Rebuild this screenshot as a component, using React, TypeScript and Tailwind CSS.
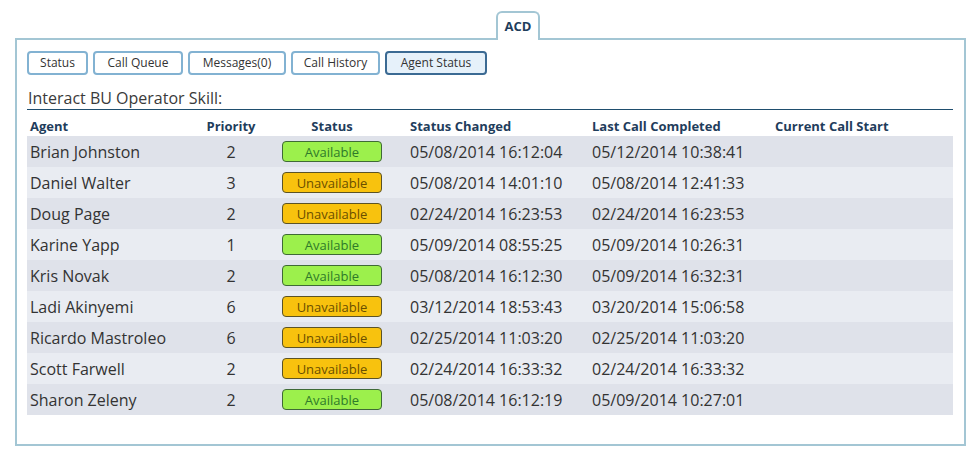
import React from 'react';

type Agent = {
  name: string;
  priority: number;
  available: boolean;
  changed: string;
  lastCall: string;
  current: string;
};

const agents: Agent[] = [
  { name: 'Brian Johnston', priority: 2, available: true, changed: '05/08/2014 16:12:04', lastCall: '05/12/2014 10:38:41', current: '' },
  { name: 'Daniel Walter', priority: 3, available: false, changed: '05/08/2014 14:01:10', lastCall: '05/08/2014 12:41:33', current: '' },
  { name: 'Doug Page', priority: 2, available: false, changed: '02/24/2014 16:23:53', lastCall: '02/24/2014 16:23:53', current: '' },
  { name: 'Karine Yapp', priority: 1, available: true, changed: '05/09/2014 08:55:25', lastCall: '05/09/2014 10:26:31', current: '' },
  { name: 'Kris Novak', priority: 2, available: true, changed: '05/08/2014 16:12:30', lastCall: '05/09/2014 16:32:31', current: '' },
  { name: 'Ladi Akinyemi', priority: 6, available: false, changed: '03/12/2014 18:53:43', lastCall: '03/20/2014 15:06:58', current: '' },
  { name: 'Ricardo Mastroleo', priority: 6, available: false, changed: '02/25/2014 11:03:20', lastCall: '02/25/2014 11:03:20', current: '' },
  { name: 'Scott Farwell', priority: 2, available: false, changed: '02/24/2014 16:33:32', lastCall: '02/24/2014 16:33:32', current: '' },
  { name: 'Sharon Zeleny', priority: 2, available: true, changed: '05/08/2014 16:12:19', lastCall: '05/09/2014 10:27:01', current: '' },
];

const tabs = [
  { label: 'Status', w: 'w-[61px]' },
  { label: 'Call Queue', w: 'w-[90px]' },
  { label: 'Messages(0)', w: 'w-[98px]' },
  { label: 'Call History', w: 'w-[89px]' },
  { label: 'Agent Status', w: 'w-[102px]', active: true },
];

const cols = 'grid grid-cols-[173px_62px_140px_182px_183px_1fr]';

const App: React.FC = () => {
  return (
    <div
      className="w-[973px] h-[457px] bg-white pt-[11px] overflow-hidden"
      style={{ fontFamily: '"Open Sans", "DejaVu Sans", sans-serif' }}
    >
      {/* tab header */}
      <div className="ml-[496px] w-[44px] h-[29px] -mb-[2px] relative z-10 bg-white border-2 border-b-0 border-[#a3c6d4] rounded-t-[6px] flex items-center justify-center">
        <span className="text-[13px] font-bold text-[#1f3d5c]">ACD</span>
      </div>

      {/* main panel */}
      <div className="ml-[15px] w-[951px] h-[408px] border-2 border-[#a3c6d4] pt-[11px] pl-[10px] pr-[11px]">
        {/* sub buttons */}
        <div className="flex gap-[5px]">
          {tabs.map((t) => (
            <div
              key={t.label}
              className={
                'h-[24px] flex items-center justify-center rounded-[4px] border-2 text-[12px] text-[#333] ' +
                t.w +
                (t.active ? ' border-[#3b6a93] bg-[#e6f1fa]' : ' border-[#82b2d2] bg-white')
              }
            >
              {t.label}
            </div>
          ))}
        </div>

        {/* skill title */}
        <div className="mt-[13px] pl-[1px] h-[22px] border-b-[1.5px] border-[#1f4e6e] text-[16px] leading-[20px] text-[#3a3a3a]">
          Interact BU Operator Skill:
        </div>

        {/* table header */}
        <div className={cols + ' h-[26px] items-end pb-[1px] text-[13px] leading-[18px] font-bold text-[#1f3d5c]'}>
          <div className="pl-[3px]">Agent</div>
          <div className="text-center">Priority</div>
          <div className="text-center">Status</div>
          <div className="pl-[8px]">Status Changed</div>
          <div className="pl-[8px]">Last Call Completed</div>
          <div className="pl-[8px]">Current Call Start</div>
        </div>

        {/* rows */}
        {agents.map((a, i) => (
          <div
            key={a.name}
            className={
              cols +
              ' h-[31px] items-center text-[16px] leading-[20px] text-[#333] ' +
              (i % 2 === 0 ? 'bg-[#dfe2ea]' : 'bg-[#e9ecf2]')
            }
          >
            <div className="pl-[3px] whitespace-nowrap">{a.name}</div>
            <div className="text-center">{a.priority}</div>
            <div className="flex justify-center">
              {a.available ? (
                <div className="w-[100px] h-[21px] rounded-[4px] border border-[#3f6a36] bg-[#9cf04c] text-[#2f7a2a] text-[13px] flex items-center justify-center">
                  Available
                </div>
              ) : (
                <div className="w-[100px] h-[21px] rounded-[4px] border border-[#5b5326] bg-[#f8c20e] text-[#6a4f00] text-[13px] flex items-center justify-center">
                  Unavailable
                </div>
              )}
            </div>
            <div className="pl-[8px] whitespace-nowrap">{a.changed}</div>
            <div className="pl-[8px] whitespace-nowrap">{a.lastCall}</div>
            <div className="pl-[8px] whitespace-nowrap">{a.current}</div>
          </div>
        ))}
      </div>
    </div>
  );
};

export default App;
